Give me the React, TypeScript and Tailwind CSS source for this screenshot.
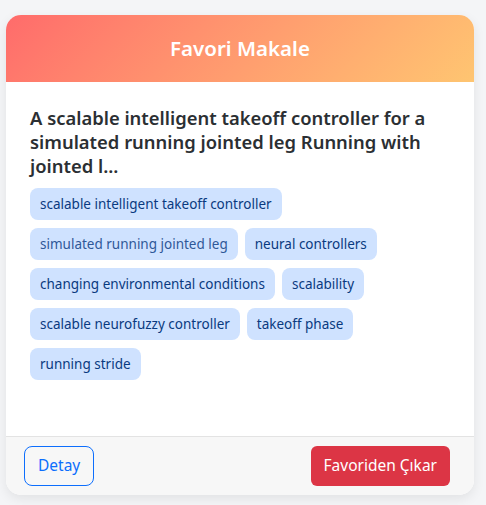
const tags = [
  "scalable intelligent takeoff controller",
  "simulated running jointed leg",
  "neural controllers",
  "changing environmental conditions",
  "scalability",
  "scalable neurofuzzy controller",
  "takeoff phase",
  "running stride",
];

export default function App() {
  return (
    <div
      className="min-h-[505px] w-full bg-[#f4f5f7] pt-[15px] pl-[6px] pr-[12px]"
      style={{ fontFamily: '"Noto Sans", "Open Sans", sans-serif' }}
    >
      <div className="flex h-[480px] w-[468px] flex-col overflow-hidden rounded-[15px] bg-white shadow-[0_4px_12px_rgba(0,0,0,0.08)]">
        <div className="flex h-[67px] items-center justify-center bg-linear-135 from-[#ff6b6b] to-[#fec571]">
          <h3 className="text-[20.5px] font-semibold text-white">Favori Makale</h3>
        </div>

        <div className="flex-1 px-6 pt-6">
          <h5 className="text-[18.4px] font-semibold leading-6 text-[#2b2f33]">
            A scalable intelligent takeoff controller for a simulated running
            jointed leg Running with jointed l...
          </h5>
          <div className="mt-[10px] flex flex-wrap gap-x-[7px] gap-y-2">
            {tags.map((tag, i) => (
              <span
                key={tag}
                className={
                  "rounded-lg bg-[#cfe2ff] px-[10px] py-1.5 text-[13.5px] leading-5 " +
                  (i === 1 ? "text-[#2f5898]" : "text-[#0a3a80]")
                }
              >
                {tag}
              </span>
            ))}
          </div>
        </div>

        <div className="flex h-[59px] items-center justify-between border-t border-[#e3e3e3] bg-[#f7f7f7] pl-[18px] pr-6">
          <button className="h-10 rounded-lg border border-[#0d6efd] px-[13px] text-[15.5px] text-[#0d6efd]">
            Detay
          </button>
          <button className="h-10 rounded-md bg-[#dc3545] px-[13px] text-[15.5px] text-white">
            Favoriden Çıkar
          </button>
        </div>
      </div>
    </div>
  );
}
